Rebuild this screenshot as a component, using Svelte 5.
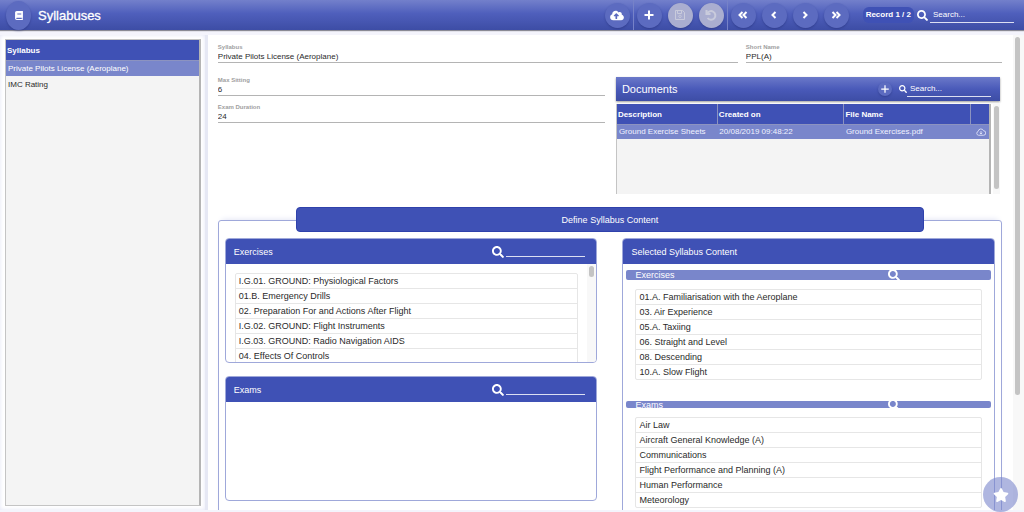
<script lang="ts">
    // Syllabus editor: record list on the left, record form on the right
    const syllabuses = ["Private Pilots License (Aeroplane)", "IMC Rating"];
    let selected = $state(0);

    const documents = [
        {
            description: "Ground Exercise Sheets",
            created: "20/08/2019 09:48:22",
            file: "Ground Exercises.pdf",
        },
    ];

    const exercises = [
        "I.G.01. GROUND: Physiological Factors",
        "01.B. Emergency Drills",
        "02. Preparation For and Actions After Flight",
        "I.G.02. GROUND: Flight Instruments",
        "I.G.03. GROUND: Radio Navigation AIDS",
        "04. Effects Of Controls",
    ];

    const selectedExercises = [
        "01.A. Familiarisation with the Aeroplane",
        "03. Air Experience",
        "05.A. Taxiing",
        "06. Straight and Level",
        "08. Descending",
        "10.A. Slow Flight",
    ];

    const selectedExams = [
        "Air Law",
        "Aircraft General Knowledge (A)",
        "Communications",
        "Flight Performance and Planning (A)",
        "Human Performance",
        "Meteorology",
    ];
</script>

{#snippet searchIcon(size: number)}
    <svg width={size} height={size} viewBox="0 0 512 512" fill="currentColor" aria-hidden="true">
        <path
            d="M505 442.7L405.3 343c-4.5-4.5-10.6-7-17-7H372c27.6-35.3 44-79.7 44-128C416 93.1 322.9 0 208 0S0 93.1 0 208s93.1 208 208 208c48.3 0 92.7-16.4 128-44v16.3c0 6.4 2.5 12.5 7 17l99.7 99.7c9.4 9.4 24.6 9.4 33.9 0l28.3-28.3c9.4-9.4 9.4-24.6.1-34zM208 336c-70.7 0-128-57.2-128-128 0-70.7 57.2-128 128-128 70.7 0 128 57.2 128 128 0 70.7-57.2 128-128 128z"
        />
    </svg>
{/snippet}

{#snippet strokeIcon(path: string, size: number, width: number)}
    <svg width={size} height={size} viewBox="0 0 12 12" fill="none" stroke="currentColor" stroke-width={width} aria-hidden="true">
        <path d={path} />
    </svg>
{/snippet}

{#snippet itemList(items: string[])}
    <ul class="items">
        {#each items as item}
            <li>{item}</li>
        {/each}
    </ul>
{/snippet}

<div class="app">
    <header class="topbar">
        <span class="round">
            <svg width="8" height="9" viewBox="0 0 448 512" fill="currentColor" aria-hidden="true">
                <path
                    d="M448 360V24c0-13.3-10.7-24-24-24H96C43 0 0 43 0 96v320c0 53 43 96 96 96h328c13.3 0 24-10.7 24-24v-16c0-7.5-3.5-14.3-8.9-18.7-4.2-15.4-4.2-59.3 0-74.7 5.4-4.3 8.9-11.1 8.9-18.6zM128 134c0-3.3 2.7-6 6-6h212c3.3 0 6 2.7 6 6v20c0 3.3-2.7 6-6 6H134c-3.3 0-6-2.7-6-6v-20zm0 64c0-3.3 2.7-6 6-6h212c3.3 0 6 2.7 6 6v20c0 3.3-2.7 6-6 6H134c-3.3 0-6-2.7-6-6v-20zm253.4 250H96c-17.7 0-32-14.3-32-32 0-17.6 14.4-32 32-32h285.4c-1.9 17.1-1.9 46.9 0 64z"
                />
            </svg>
        </span>
        <h1>Syllabuses</h1>

        <div class="tools">
            <div class="group">
                <button class="round" aria-label="Upload">
                    <svg width="14" height="11" viewBox="0 0 640 512" fill="currentColor">
                        <path
                            d="M537.6 226.6c4.1-10.7 6.4-22.4 6.4-34.6 0-53-43-96-96-96-19.7 0-38.1 6-53.3 16.2C367 64.2 315.3 32 256 32c-88.4 0-160 71.6-160 160 0 2.7.1 5.4.2 8.1C40.2 219.8 0 273.2 0 336c0 79.5 64.5 144 144 144h368c70.7 0 128-57.3 128-128 0-61.9-44-113.6-102.4-125.4zM393.4 288H328v112c0 8.8-7.2 16-16 16h-48c-8.8 0-16-7.2-16-16V288h-65.4c-14.3 0-21.4-17.2-11.3-27.3l105.4-105.4c6.2-6.2 16.4-6.2 22.6 0l105.4 105.4c10.1 10.1 2.9 27.3-11.3 27.3z"
                        />
                    </svg>
                </button>
            </div>
            <div class="group divided">
                <button class="round" aria-label="Add">
                    {@render strokeIcon("M6 1.5v9M1.5 6h9", 12, 2)}
                </button>
                <button class="round" aria-label="Save" disabled>
                    {@render strokeIcon("M1.500 1.500h7L10.500 3.500v7h-9zM3.500 1.500v3h4v-3M6 6.200a1.200 1.200 0 1 0 .01 0", 12, 1)}
                </button>
                <button class="round" aria-label="Undo" disabled>
                    {@render strokeIcon("M1.5 1v4h4M2 5a4.3 4.3 0 1 1 .6 4", 12, 2)}
                </button>
            </div>
            <div class="group divided">
                <button class="round" aria-label="First record">
                    {@render strokeIcon("M5.5 3l-3 3 3 3M9.5 3l-3 3 3 3", 12, 2)}
                </button>
                <button class="round" aria-label="Previous record">
                    {@render strokeIcon("M7.5 3l-3 3 3 3", 12, 2)}
                </button>
                <button class="round" aria-label="Next record">
                    {@render strokeIcon("M4.5 3l3 3-3 3", 12, 2)}
                </button>
                <button class="round" aria-label="Last record">
                    {@render strokeIcon("M2.5 3l3 3-3 3M6.5 3l3 3-3 3", 12, 2)}
                </button>
            </div>
        </div>

        <span class="record">Record 1 / 2</span>
        <label class="search">
            {@render searchIcon(11)}
            <input type="text" placeholder="Search..." aria-label="Search records" />
        </label>
    </header>

    <div class="body">
        <aside class="sidebar">
            <div class="grid">
                <table>
                    <thead>
                        <tr><th>Syllabus</th></tr>
                    </thead>
                    <tbody>
                        {#each syllabuses as name, i}
                            <tr class:active={i === selected} onclick={() => (selected = i)}>
                                <td>{name}</td>
                            </tr>
                        {/each}
                    </tbody>
                </table>
            </div>
        </aside>

        <div class="splitter"></div>

        <main class="main">
            <div class="content">
                <div class="names">
                    <label class="field">
                        <span>Syllabus</span>
                        <input type="text" value="Private Pilots License (Aeroplane)" />
                    </label>
                    <label class="field">
                        <span>Short Name</span>
                        <input type="text" value="PPL(A)" />
                    </label>
                </div>

                <div class="details">
                    <div class="limits">
                        <label class="field">
                            <span>Max Sitting</span>
                            <input type="text" value="6" />
                        </label>
                        <label class="field">
                            <span>Exam Duration</span>
                            <input type="text" value="24" />
                        </label>
                    </div>

                    <section class="documents">
                        <div class="docbar">
                            <h2>Documents</h2>
                            <button class="round small" aria-label="Add document">
                                {@render strokeIcon("M6 1.5v9M1.5 6h9", 10, 1.5)}
                            </button>
                            <label class="search">
                                {@render searchIcon(8)}
                                <input type="text" placeholder="Search..." aria-label="Search documents" />
                            </label>
                        </div>
                        <div class="docbody">
                            <div class="grid">
                                <table>
                                    <colgroup>
                                        <col class="narrow" />
                                        <col class="wide" />
                                        <col class="wide" />
                                        <col />
                                    </colgroup>
                                    <thead>
                                        <tr>
                                            <th>Description</th>
                                            <th>Created on</th>
                                            <th>File Name</th>
                                            <th></th>
                                        </tr>
                                    </thead>
                                    <tbody>
                                        {#each documents as doc}
                                            <tr class="active">
                                                <td>{doc.description}</td>
                                                <td>{doc.created}</td>
                                                <td>{doc.file}</td>
                                                <td class="get">
                                                    <button aria-label="Download">
                                                        <svg width="10" height="8" viewBox="0 0 20 16" fill="none" stroke="currentColor" stroke-width="1.5">
                                                            <path d="M5 14.5a4 4 0 0 1-.6-7.8A5.5 5.5 0 0 1 15 5.5a4.5 4.5 0 0 1 0 9zM10 6v6M7.5 9.7L10 12l2.5-2.3" />
                                                        </svg>
                                                    </button>
                                                </td>
                                            </tr>
                                        {/each}
                                    </tbody>
                                </table>
                            </div>
                            <div class="track"><div class="thumb"></div></div>
                        </div>
                    </section>
                </div>

                <section class="define">
                    <button class="title">Define Syllabus Content</button>
                    <div class="columns">
                        <div class="column">
                            <section class="panel">
                                <div class="head">
                                    <h3>Exercises</h3>
                                    <label class="search">
                                        {@render searchIcon(12)}
                                        <input type="text" aria-label="Search exercises" />
                                    </label>
                                </div>
                                <div class="scroller">
                                    <div class="view">{@render itemList(exercises)}</div>
                                    <div class="track"><div class="thumb"></div></div>
                                </div>
                            </section>
                            <section class="panel">
                                <div class="head">
                                    <h3>Exams</h3>
                                    <label class="search">
                                        {@render searchIcon(12)}
                                        <input type="text" aria-label="Search exams" />
                                    </label>
                                </div>
                                <div class="scroller"></div>
                            </section>
                        </div>

                        <section class="panel chosen">
                            <div class="head"><h3>Selected Syllabus Content</h3></div>
                            <div class="sub">
                                <div class="bar">
                                    <h4>Exercises</h4>
                                    {@render searchIcon(12)}
                                </div>
                                {@render itemList(selectedExercises)}
                            </div>
                            <div class="sub">
                                <div class="bar thin">
                                    <h4>Exams</h4>
                                    {@render searchIcon(12)}
                                </div>
                                {@render itemList(selectedExams)}
                            </div>
                        </section>
                    </div>
                </section>
            </div>
            <div class="track"><div class="thumb"></div></div>
        </main>
    </div>

    <button class="fab" aria-label="Favourites">
        <svg width="16" height="14" viewBox="0 0 576 512" fill="currentColor">
            <path
                d="M259.3 17.8L194 150.2 47.9 171.5c-26.2 3.8-36.7 36.1-17.7 54.6l105.7 103-25 145.5c-4.5 26.3 23.2 46 46.4 33.7L288 439.6l130.7 68.7c23.2 12.2 50.9-7.4 46.4-33.7l-25-145.5 105.7-103c19-18.5 8.5-50.8-17.7-54.6L382 150.2 316.7 17.8c-11.7-23.6-45.6-23.9-57.4 0z"
            />
        </svg>
    </button>
</div>

<style>
    :global(body) {
        margin: 0;
        font-family: "Liberation Sans", Arial, sans-serif;
        font-size: 9px;
        color: #2a2a2a;
    }

    .app,
    .app * {
        box-sizing: border-box;
    }

    .app {
        display: flex;
        flex-direction: column;
        height: 100vh;
        padding-bottom: 2px;
        background: #f4f4fc;
        overflow: hidden;
    }

    h1,
    h2,
    h3,
    h4 {
        margin: 0;
        font-size: 9px;
        font-weight: normal;
    }

    button,
    input {
        font: inherit;
        color: inherit;
        border: none;
        padding: 0;
        margin: 0;
        background: none;
    }

    input {
        min-width: 0;
        border-radius: 0;
        outline: none;
    }

    svg {
        display: block;
        flex: none;
    }

    /* Top bar */
    .topbar {
        display: flex;
        align-items: center;
        flex: none;
        height: 30px;
        padding: 0 10px 0 6px;
        color: #ffffff;
        background: linear-gradient(#7380cb, #4f5fbc 45%, #3d4da5);
        box-shadow: 0 1px 1px #8a8a94;
        z-index: 1;
    }

    h1 {
        flex: 1;
        margin-left: 7px;
        font-size: 13px;
        -webkit-text-stroke: 0.3px;
    }

    .round {
        display: flex;
        align-items: center;
        justify-content: center;
        flex: none;
        width: 25px;
        height: 25px;
        border-radius: 50%;
        color: #ffffff;
        background: #5c6bc0;
        box-shadow: 0 1px 2px rgba(30, 40, 110, 0.4);
    }

    .topbar > .round {
        height: 29px;
    }

    .round:disabled {
        color: #c9cbdc;
        background: #aaaed0;
    }

    .round.small {
        width: 14px;
        height: 14px;
    }

    .tools {
        display: flex;
        align-self: stretch;
        gap: 3px;
    }

    .group {
        display: flex;
        align-items: center;
        gap: 6px;
    }

    .divided {
        padding-left: 3px;
        border-left: 1px solid #7682c8;
    }

    .record {
        margin: 0 3px 0 14px;
        padding: 3px;
        border-radius: 6px;
        font-size: 8px;
        font-weight: bold;
        line-height: 10px;
        background: #3f51b5;
    }

    .search {
        display: flex;
        align-items: center;
        gap: 2px;
        color: #ffffff;
    }

    .search input {
        width: 84px;
        height: 15px;
        padding-left: 3px;
        font-size: 8px;
        border-bottom: 1px solid #dcdff2;
    }

    .search input::placeholder {
        color: #ffffff;
        opacity: 1;
    }

    /* Page body */
    .body {
        display: flex;
        flex: 1;
        min-height: 0;
        padding-top: 5px;
    }

    .sidebar {
        display: flex;
        flex: none;
        width: 20%;
        padding: 4px 4px 4px 5px;
        background: #ffffff;
        box-shadow: inset 0 0 4px #e4e6f6;
    }

    .splitter {
        flex: none;
        width: 3px;
        background: #e6e8f4;
    }

    .grid {
        flex: 1;
        border: 1px solid #c4c4c4;
        border-right: 2px solid #b4b4b4;
        background: #f4f4f4;
        overflow: hidden;
    }

    table {
        width: 100%;
        table-layout: fixed;
        border-collapse: collapse;
        font-size: 8px;
    }

    th {
        height: 20px;
        padding: 2px 0 0 1px;
        text-align: left;
        white-space: nowrap;
        color: #ffffff;
        background: #3f51b5;
        border-bottom: 1px solid #8c93c0;
    }

    th + th {
        border-left: 1px solid #8c93c0;
    }

    td {
        height: 15px;
        padding: 0 2px;
        white-space: nowrap;
    }

    .sidebar td {
        height: 16px;
    }

    .active {
        color: #ffffff;
        background: #7986cb;
    }

    .main {
        display: flex;
        flex: 1;
        min-width: 0;
        background: #ffffff;
    }

    .content {
        flex: 1;
        min-width: 0;
        padding: 9px 11px 0 10px;
        overflow: hidden;
    }

    .track {
        flex: none;
        width: 7px;
        padding: 2px 1px;
        background: #f8f8f8;
    }

    .thumb {
        height: 100%;
        border-radius: 3px;
        background: #c4c4c4;
    }

    .main > .track {
        width: 11px;
        padding: 2px 4px 2px 2px;
    }

    .main > .track .thumb {
        height: 76%;
    }

    /* Form fields */
    .field {
        display: flex;
        flex-direction: column;
    }

    .field span {
        font-size: 6px;
        font-weight: bold;
        line-height: 7px;
        color: #a0a0a0;
    }

    .field input {
        height: 12px;
        padding-bottom: 1px;
        font-size: 8px;
        border-bottom: 1px solid #b4b4b4;
    }

    .names {
        display: grid;
        grid-template-columns: 67fr 33fr;
        column-gap: 8px;
    }

    .details {
        display: grid;
        grid-template-columns: 1fr 1fr;
        column-gap: 10px;
        margin-top: 14px;
    }

    .limits {
        display: flex;
        flex-direction: column;
        gap: 8px;
    }

    .documents {
        padding: 0 2px 0 1px;
    }

    .docbar {
        display: flex;
        align-items: center;
        height: 24px;
        padding: 0 9px 0 6px;
        color: #ffffff;
        background: linear-gradient(#6b79c9, #4a5ab9 50%, #3d4da5);
        box-shadow: 0 1px 2px #9a9a9a;
    }

    .docbar h2 {
        flex: 1;
        font-size: 11px;
    }

    .docbar .search {
        gap: 0;
        margin-left: 7px;
    }

    .docbody {
        display: flex;
        gap: 2px;
        height: 90px;
        margin-top: 3px;
    }

    .docbody .grid {
        border-top: none;
        border-bottom: none;
    }

    .docbody .thumb {
        height: 97%;
    }

    .docbody td {
        color: #f0f2ff;
    }

    .narrow {
        width: 27%;
    }

    .wide {
        width: 34%;
    }

    .get button {
        display: block;
        margin-left: 4px;
    }

    /* Content picker */
    .define {
        margin-top: 13px;
    }

    .title {
        display: block;
        position: relative; /* overlaps the frame's top border */
        width: 80%;
        height: 25px;
        margin: 0 auto -12px;
        border: 1px solid #2f41ab;
        border-radius: 4px;
        color: #ffffff;
        background: #3f51b5;
    }

    .columns {
        display: grid;
        grid-template-columns: 1fr 1fr;
        align-items: start;
        column-gap: 25px;
        height: 406px;
        padding: 17px 6px;
        border: 1px solid #9fa8da;
        border-radius: 3px;
        box-shadow: 0 -4px 6px -4px #dcdff2;
    }

    .column {
        display: flex;
        flex-direction: column;
        gap: 13px;
    }

    .panel {
        border: 1px solid #9fa8da;
        border-radius: 4px;
        overflow: hidden;
    }

    .chosen {
        min-height: 380px;
    }

    .head {
        display: flex;
        align-items: center;
        justify-content: space-between;
        height: 25px;
        padding: 0 11px 0 8px;
        color: #ffffff;
        background: #3f51b5;
    }

    .head .search input {
        width: 79px;
        height: 11px;
    }

    .scroller {
        display: flex;
        height: 98px;
    }

    .view {
        flex: 1;
        min-width: 0;
        padding: 9px 9px 0;
        overflow: hidden;
    }

    .scroller .track {
        width: 9px;
        padding: 2px;
    }

    .scroller .thumb {
        height: 11px;
    }

    .items {
        margin: 0;
        padding: 0;
        list-style: none;
        border: 1px solid #e6e6e6;
        border-radius: 2px;
    }

    .items li {
        height: 15px;
        padding-left: 3px;
        line-height: 14px;
        white-space: nowrap;
        border-bottom: 1px solid #e6e6e6;
    }

    .items li:last-child {
        border-bottom: none;
        height: 14px;
    }

    .sub {
        padding: 6px 3px 15px;
    }

    .sub .items {
        margin: 9px 9px 0;
    }

    .bar {
        display: grid;
        grid-template-columns: 71% 1fr;
        align-items: center;
        align-content: center;
        height: 10px;
        padding-left: 9px;
        border-radius: 2px;
        color: #ffffff;
        background: #7986cb;
        overflow: hidden;
    }

    .bar.thin {
        height: 7px;
    }

    .fab {
        display: flex;
        align-items: center;
        justify-content: center;
        position: fixed;
        right: 6px;
        bottom: 0;
        width: 35px;
        height: 35px;
        border-radius: 50%;
        color: #ffffff;
        background: rgba(121, 134, 203, 0.6);
    }
</style>
